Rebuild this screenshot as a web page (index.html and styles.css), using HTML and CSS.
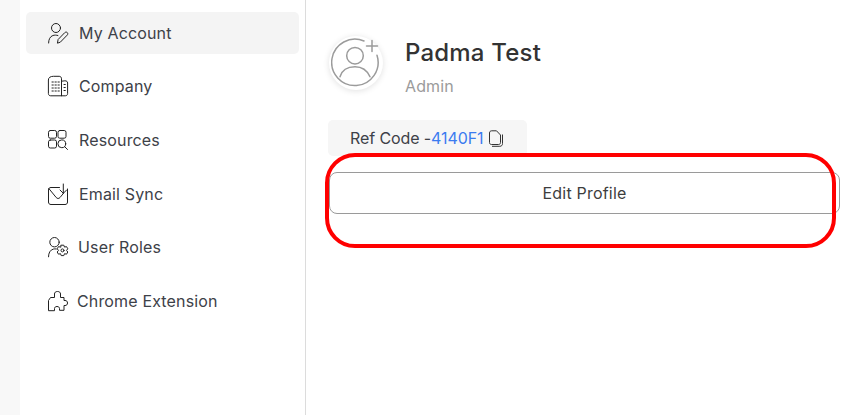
FILE: index.html
```html
<!DOCTYPE html>
<html lang="en">
<head>
<meta charset="utf-8">
<title>My Account</title>
<link rel="stylesheet" href="styles.css">
</head>
<body>
<div class="page">
  <div class="strip"></div>
  <nav class="sidebar">
    <a class="item active">
      <svg class="icon" viewBox="0 0 20 20"><circle cx="8" cy="5" r="4.500"/><path d="M.6 20c0-3.500 1.400-6.500 4.300-7.500 1.500-.5 3.500-.5 5 0"/><path d="M9.500 19.800l.6-3.300 6.600-6.800c.8-.8 2-.8 2.600-.1.700.7.600 1.800-.1 2.500l-6.600 6.800z"/></svg>
      <span>My Account</span>
    </a>
    <a class="item company">
      <svg class="icon" viewBox="0 0 20 20"><path d="M13.500 4.800V2.800C13.500 1.300 12.600.3 11.200.3H5.500C2.500.3 .4 1.500 .4 4V17.500c0 1.400 .9 2.300 2.300 2.300H17.300c1.400 0 2.300-.9 2.300-2.300V7C19.600 5.600 18.700 4.800 17.300 4.800zM13.500 4.800V19.800"/><path d="M4 6h1.300M7 6H8.300M10 6h1.300M4 9h1.300M7 9H8.300M10 9h1.300M4 12h1.300M7 12H8.300M10 12h1.300M4 15h1.300M7 15H8.300M10 15h1.300M16 8.500h1.300M16 11.500h1.300M16 14.500h1.300"/></svg>
      <span>Company</span>
    </a>
    <a class="item">
      <svg class="icon" viewBox="0 0 20 20"><rect x=".5" y=".5" width="8" height="7.700" rx="1.800"/><rect x="10" y=".5" width="8" height="7.700" rx="1.800"/><rect x=".5" y="10" width="8" height="8" rx="1.800"/><circle cx="13.800" cy="13.800" r="3.900"/><path d="M16.700 16.700l2.800 2.800"/></svg>
      <span>Resources</span>
    </a>
    <a class="item">
      <svg class="icon" viewBox="0 0 20 20"><path d="M11.500 3.500H3C1.400 3.500 .5 4.400 .5 6v12c0 1.600 .9 2.500 2.500 2.500h14c1.600 0 2.500-.9 2.500-2.500V5"/><path d="M.8 4.500l7.400 9c1 1.300 2.800 1.300 3.800 0l3.500-4.200"/><path d="M15.300 0v9M12 6l3.300 3.300L18.600 6"/></svg>
      <span>Email Sync</span>
    </a>
    <a class="item roles">
      <svg class="icon" viewBox="0 0 20 20"><circle cx="6.500" cy="5.200" r="4.700"/><path d="M.5 19.800c0-4 1.700-6.800 4.800-7.700 1-.3 2-.3 3-.1"/><path d="M13.200 8.200h2.600l.7 1.900 2-.5 1.300 2.200-1.300 1.600 1.300 1.600-1.300 2.200-2-.5-.7 1.900h-2.600l-.7-1.900-2 .5-1.300-2.200 1.300-1.600-1.300-1.600 1.300-2.200 2 .5z"/><circle cx="14.500" cy="13.400" r="1.500"/></svg>
      <span>User Roles</span>
    </a>
    <a class="item ext">
      <svg class="icon" viewBox="0 0 20 20"><path d="M.5 19.300V9.500L2.500 6.500H6.500V3C6.500 1.500 7.500 .5 9.500 .5S12.500 1.500 12.500 3V6.500H16V9.500H17C18.500 9.500 19.500 10.300 19.500 12S18.500 14.500 17 14.500H16V19.300H11.500V17.500C11.500 16.300 10.500 15.500 9 15.500S6.500 16.300 6.500 17.500V19.300Z"/></svg>
      <span>Chrome Extension</span>
    </a>
  </nav>
  <main class="main">
    <header class="profile">
      <div class="avatar">
        <svg class="avatar-icon" viewBox="0 0 50 50"><path d="M33 3A23.200 23.200 0 1 0 46 17.300"/><circle cx="24" cy="17.700" r="8.300"/><path d="M9 38.700C11 32 17 28.700 24 28.700S36 32 39 38.700"/><path d="M41 2.500v11M35.500 8h11"/></svg>
      </div>
      <div class="who">
        <h1 class="name">Padma Test</h1>
        <p class="role">Admin</p>
      </div>
    </header>
    <div class="ref">
      <span>Ref Code -</span><span class="code">4140F1</span>
      <svg class="copy" viewBox="0 0 16 17"><path d="M1.500 12.500V3C1.500 1.600 2.400 .8 3.700 .8H8.500L12.500 5V12.500C12.500 13.800 11.700 14.500 10.500 14.500H3.500C2.300 14.500 1.500 13.800 1.500 12.500Z"/><path d="M14.500 4.500V13.500C14.500 15.300 13.500 16.300 11.800 16.300H4"/></svg>
    </div>
    <button class="edit">Edit Profile</button>
  </main>
  <div class="annotation"></div>
</div>
</body>
</html>
```
FILE: styles.css
```css
* { box-sizing: border-box; }
html, body { margin: 0; padding: 0; }
body {
  width: 850px;
  height: 415px;
  overflow: hidden;
  background: #fff;
  font-family: Inter, "Liberation Sans", sans-serif;
  color: #3a3a3a;
}
.page {
  position: relative;
  display: flex;
  width: 850px;
  height: 415px;
}
.strip {
  width: 20px;
  flex: none;
  background: #f8f8f8;
}
.sidebar {
  width: 286px;
  flex: none;
  padding: 12px 6px 0;
  border-right: 1px solid #dcdcdc;
  display: flex;
  flex-direction: column;
}
.item {
  display: flex;
  align-items: center;
  gap: 11px;
  height: 42px;
  margin-bottom: 11.600px;
  padding-left: 22px;
  border-radius: 5px;
  font-size: 16px;
  letter-spacing: .15px;
  color: #3d4148;
}
.item.active { background: #f4f4f4; }
.company { margin-top: -.6px; margin-bottom: 12.200px; }
.roles { gap: 10px; }
.ext { gap: 9px; }
.icon {
  width: 20px;
  height: 20px;
  flex: none;
  overflow: visible;
  fill: none;
  stroke: #222;
  stroke-width: 1;
  stroke-linecap: round;
  stroke-linejoin: round;
}
.main {
  flex: 1;
  min-width: 0;
  padding: 24px 10px 0 22px;
}
.profile {
  display: flex;
  align-items: center;
  gap: 22px;
  height: 78px;
  margin-bottom: 18px;
  padding-left: 1px;
}
.avatar {
  width: 54px;
  height: 54px;
  flex: none;
  border-radius: 50%;
  background: #fff;
  box-shadow: 0 1px 6px rgba(0,0,0,.12);
  display: flex;
  align-items: center;
  justify-content: center;
}
.avatar-icon {
  width: 50px;
  height: 50px;
  fill: none;
  stroke: #9b9b9b;
  stroke-width: 1.500;
  stroke-linecap: round;
}
.who {
  display: flex;
  flex-direction: column;
  gap: 8px;
  padding-top: 8px;
}
.name {
  margin: 0;
  font-size: 24px;
  line-height: 30px;
  font-weight: 500;
  letter-spacing: .2px;
  color: #333;
}
.role {
  margin: 0;
  font-size: 16px;
  line-height: 20px;
  letter-spacing: .1px;
  color: #9b9b9b;
}
.ref {
  display: flex;
  align-items: center;
  width: 199px;
  height: 36px;
  padding-left: 22px;
  margin-bottom: 16px;
  border-radius: 5px;
  background: #f6f6f6;
  font-size: 16px;
  letter-spacing: -.1px;
  color: #3d4148;
}
.code { color: #3b7bf0; }
.copy {
  width: 16px;
  height: 17px;
  margin-left: 5px;
  fill: none;
  stroke: #333;
  stroke-width: 1;
}
.edit {
  display: block;
  width: 511px;
  height: 42px;
  margin-left: 1px;
  padding: 0;
  border: 1px solid #9a9a9a;
  border-radius: 8px;
  background: #fff;
  font: 16px Inter, "Liberation Sans", sans-serif;
  letter-spacing: .2px;
  color: #3d3d3d;
}
.annotation {
  position: absolute;
  left: 325px;
  top: 153px;
  width: 511px;
  height: 95px;
  border: 4px solid #f00;
  border-radius: 30px;
  pointer-events: none;
}
```
